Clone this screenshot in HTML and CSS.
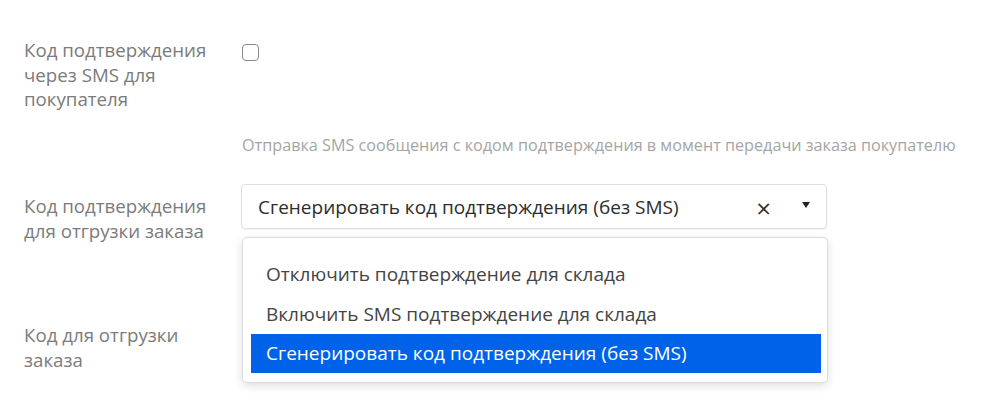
FILE: index.html
```html
<!DOCTYPE html>
<html lang="ru">
<head>
    <meta charset="UTF-8">
    <title>Настройки подтверждения</title>
    <link rel="stylesheet" href="styles.css">
</head>
<body>
    <div class="settings">
        <!-- SMS code for buyer -->
        <div class="row row-sms">
            <label class="row-label" for="smsBuyer">Код подтверждения через SMS для покупателя</label>
            <div class="row-control">
                <input type="checkbox" id="smsBuyer" class="checkbox">
                <p class="hint">Отправка SMS сообщения с кодом подтверждения в момент передачи заказа покупателю</p>
            </div>
        </div>

        <!-- Warehouse confirmation mode -->
        <div class="row row-mode">
            <div class="row-label">Код подтверждения для отгрузки заказа</div>
            <div class="row-control">
                <div class="select">
                    <span class="select-value">Сгенерировать код подтверждения (без SMS)</span>
                    <span class="select-clear">&times;</span>
                    <span class="select-arrow"></span>

                    <ul class="dropdown">
                        <li class="dropdown-item">Отключить подтверждение для склада</li>
                        <li class="dropdown-item">Включить SMS подтверждение для склада</li>
                        <li class="dropdown-item active">Сгенерировать код подтверждения (без SMS)</li>
                    </ul>
                </div>
            </div>
        </div>

        <!-- Shipment code -->
        <div class="row row-code">
            <div class="row-label">Код для отгрузки заказа</div>
            <div class="row-control"></div>
        </div>
    </div>
</body>
</html>
```

FILE: styles.css
```css
/* Base */
* {
    box-sizing: border-box;
}

html,
body {
    min-height: 400px;
}

body {
    margin: 0;
    padding: 38px 0 0 24px;
    font-family: 'Open Sans', sans-serif;
    background: #fff;
    color: #333;
}

/* Form rows */
.row {
    display: grid;
    grid-template-columns: 217px 586px;
}

.row-label {
    font-size: 18.7px;
    line-height: 24.5px;
    color: #7b7b7b;
    padding-right: 10px;
}

.row-control {
    position: relative;
}

/* Checkbox row */
.checkbox {
    appearance: none;
    -webkit-appearance: none;
    width: 17px;
    height: 17px;
    margin: 6px 0 0 1px;
    border: 1.5px solid #8a8a8a;
    border-radius: 4px;
    background: #fff;
    display: block;
}

.hint {
    margin: 74px 0 0 1px;
    font-size: 16.2px;
    line-height: 20px;
    color: #a5a5a5;
    white-space: nowrap;
}

.row-mode {
    margin-top: 29px;
}

.row-mode .row-label {
    padding-top: 10px;
}

/* Select */
.select {
    position: relative;
    height: 45px;
    border: 1px solid #dedede;
    border-radius: 4px;
    box-shadow: 0 1px 2px rgba(0, 0, 0, 0.05);
    display: flex;
    align-items: center;
    padding: 0 16px;
}

.select-value {
    flex: 1;
    font-size: 19px;
    color: #2d2d2d;
}

.select-clear {
    font-size: 26px;
    line-height: 1;
    color: #333;
    margin: 2px 31px 0 0;
}

.select-arrow {
    width: 0;
    height: 0;
    border-left: 4.5px solid transparent;
    border-right: 4.5px solid transparent;
    border-top: 6px solid #222;
    margin: -4px 0 0 0;
}

/* Dropdown menu */
.dropdown {
    position: absolute;
    top: 52px;
    left: 0;
    width: 586px;
    margin: 0;
    padding: 16px 6px 9px 8px;
    list-style: none;
    background: #fff;
    border: 1px solid #dcdcdc;
    border-radius: 5px;
    box-shadow: 0 3px 10px rgba(0, 0, 0, 0.13);
    z-index: 10;
}

.dropdown-item {
    height: 40px;
    line-height: 40px;
    padding-left: 15px;
    font-size: 19px;
    color: #444;
}

.dropdown-item.active {
    height: 39px;
    line-height: 39px;
    background: #0062e8;
    color: #fff;
}

/* Last row */
.row-code {
    margin-top: 80px;
}
```
